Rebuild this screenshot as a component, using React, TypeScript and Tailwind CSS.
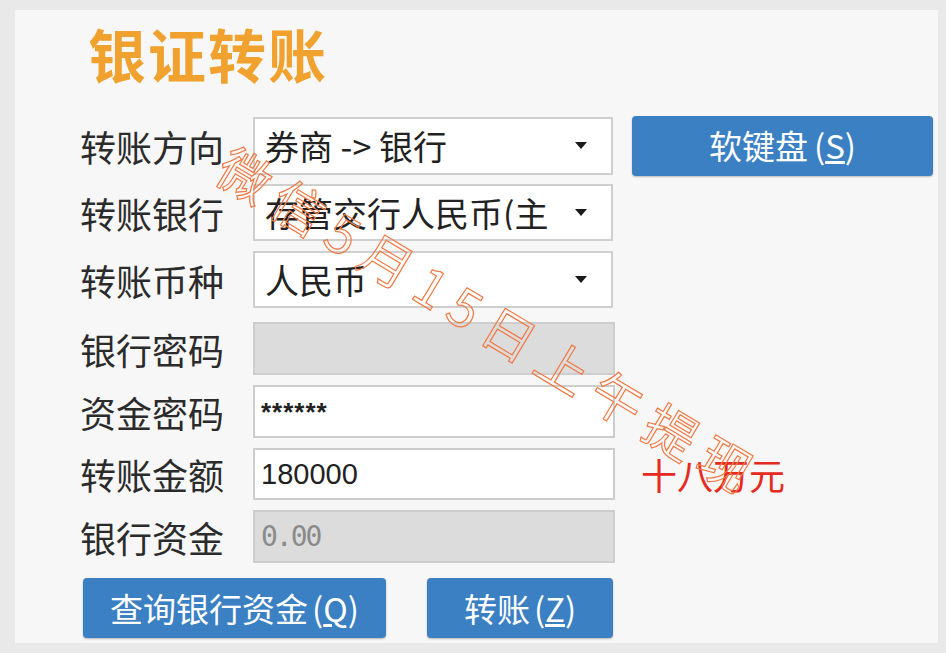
// 银证转账 form — bank/securities transfer panel
const cjk = "font-['Noto_Sans_CJK_SC','Noto_Sans_CJK_JP',sans-serif]";

function Arrow() {
  return (
    <svg width="12" height="8" viewBox="0 0 12 8" className="shrink-0">
      <path d="M0 0 L12 0 L6 7 Z" fill="#1a1a1a" />
    </svg>
  );
}

function Combo({ text }: { text: string }) {
  return (
    <div className="h-full w-[360px] border-2 border-[#cfcfcf] bg-white flex items-center pl-[10px] pr-[24px] overflow-hidden">
      <span className="flex-1 text-[34px] leading-none text-[#222] whitespace-nowrap overflow-hidden">{text}</span>
      <Arrow />
    </div>
  );
}

function Field({ value, disabled, small }: { value?: string; disabled?: boolean; small?: boolean }) {
  return (
    <div
      className={`h-full w-[362px] border-2 border-[#cdcdcd] flex items-center pl-[6px] ${
        disabled ? 'bg-[#dcdcdc]' : 'bg-white'
      }`}
    >
      {value && (
        <span
          className={`leading-none ${
            disabled
              ? "text-[#8a8a8a] text-[28px] font-['DejaVu_Sans_Mono',monospace] tracking-[-2px]"
              : small
              ? "text-[#222] text-[26px] font-['Liberation_Sans',sans-serif] font-bold tracking-[1px]"
              : "text-[#222] text-[29px] font-['Liberation_Sans',sans-serif]"
          }`}
        >
          {value}
        </span>
      )}
    </div>
  );
}

function Row({ label, h, mt, children, extra }: { label: string; h: string; mt: string; children: React.ReactNode; extra?: React.ReactNode }) {
  return (
    <div className={`flex items-center ${h} ${mt}`}>
      <div className="w-[173px] shrink-0 text-[36px] leading-none text-[#2b2b2b]">{label}</div>
      {children}
      {extra}
    </div>
  );
}

function BlueButton({ children, w }: { children: React.ReactNode; w: string }) {
  return (
    <div
      className={`${w} h-[60px] rounded-[4px] bg-[#3b80c3] flex items-center justify-center text-white text-[33px] leading-none shadow-[0_1px_2px_rgba(0,0,0,0.25)]`}
    >
      {children}
    </div>
  );
}

export default function App() {
  return (
    <div className={`w-[946px] h-[653px] bg-[#e9e9e9] pt-[10px] pl-[15px] ${cjk}`}>
      <div className="relative w-[923px] h-[633px] bg-[#f7f7f7] pl-[65px] overflow-hidden">
        <h1 className="ml-[8px] pt-[14px] text-[58px] leading-none font-bold text-[#f0a12e] tracking-[2px]">
          银证转账
        </h1>

        <Row
          label="转账方向"
          h="h-[58px]"
          mt="mt-[35px]"
          extra={
            <div className="ml-[19px] h-[61px]">
              <BlueButton w="w-[301px]">
                软键盘<span className="ml-[6px]">(</span>
                <span className="underline underline-offset-2">S</span>)
              </BlueButton>
            </div>
          }
        >
          <Combo text="券商 -> 银行" />
        </Row>
        <Row label="转账银行" h="h-[57px]" mt="mt-[9px]">
          <Combo text="存管交行人民币(主" />
        </Row>
        <Row label="转账币种" h="h-[57px]" mt="mt-[10px]">
          <Combo text="人民币" />
        </Row>
        <Row label="银行密码" h="h-[53px]" mt="mt-[14px]">
          <Field disabled />
        </Row>
        <Row label="资金密码" h="h-[53px]" mt="mt-[10px]">
          <Field value="******" small />
        </Row>
        <Row
          label="转账金额"
          h="h-[52px]"
          mt="mt-[10px]"
          extra={<span className="ml-[26px] text-[36px] leading-none text-[#e52a22]">十八万元</span>}
        >
          <Field value="180000" />
        </Row>
        <Row label="银行资金" h="h-[53px]" mt="mt-[10px]">
          <Field value="0.00" disabled />
        </Row>

        <div className="flex mt-[15px] ml-[3px]">
          <BlueButton w="w-[303px]">
            查询银行资金<span className="ml-[4px]">(</span>
            <span className="underline underline-offset-2">Q</span>)
          </BlueButton>
          <div className="ml-[41px]">
            <BlueButton w="w-[186px]">
              转账<span className="ml-[4px]">(</span>
              <span className="underline underline-offset-2">Z</span>)
            </BlueButton>
          </div>
        </div>

        {/* diagonal watermark */}
        <div className="absolute left-[222px] top-[128px] origin-top-left rotate-[31deg] whitespace-nowrap text-[52px] leading-none text-transparent [-webkit-text-stroke:1.2px_#f07a45] tracking-[11px] pointer-events-none">
          微信5月15日上午提现
        </div>
      </div>
    </div>
  );
}
